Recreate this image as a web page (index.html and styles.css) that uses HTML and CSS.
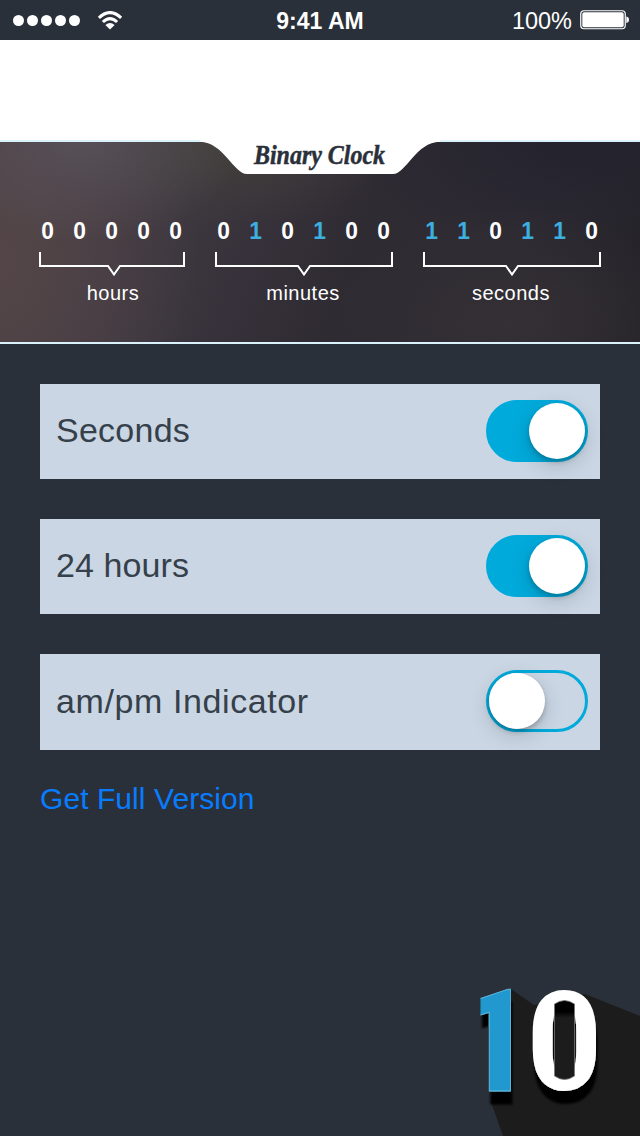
FILE: index.html
```html
<!DOCTYPE html>
<html lang="en">
<head>
<meta charset="utf-8">
<title>Binary Clock</title>
<link rel="stylesheet" href="styles.css">
</head>
<body>
<main class="screen">
  <header class="status">
    <div class="signal">
      <div class="dots"><i></i><i></i><i></i><i></i><i></i></div>
      <svg class="wifi" width="26" height="19" viewBox="0 0 26 19">
        <path d="M1.9 6.8Q13-3.6 24.1 6.8M5.9 11Q13 4.2 20.1 11" fill="none" stroke="#fff" stroke-width="3.1"/>
        <path d="M8.4 14Q13 9.8 17.6 14L13 18.4Z" fill="#fff"/>
      </svg>
    </div>
    <div class="time">9:41 AM</div>
    <div class="power">
      <span class="percent">100%</span>
      <svg width="50" height="20" viewBox="0 0 50 20">
        <rect x=".75" y=".75" width="44.5" height="18" rx="3.2" fill="none" stroke="#fff" stroke-width="1.2"/>
        <rect x="2.3" y="2.3" width="41.4" height="15" rx="1.8" fill="#fff"/>
        <path d="M46.3 6.500Q49 7 49 9.800Q49 12.500 46.300 13Z" fill="#fff"/>
      </svg>
    </div>
  </header>
  <div class="banner"></div>
  <section class="clock">
    <svg class="tab" width="240" height="34" viewBox="0 0 240 34">
      <path d="M0 0V1.700C23 2 34 34 47 34H193C206 34 216 2 240 1.700V0Z" fill="#fff"/>
      <text class="title" x="54" y="24" textLength="131" lengthAdjust="spacingAndGlyphs">Binary Clock</text>
    </svg>
    <div class="group hours">
      <div class="bits"><b>0</b><b>0</b><b>0</b><b>0</b><b>0</b></div>
      <svg class="bracket" width="146" height="26" viewBox="0 0 146 26"><path d="M1 0V14H69L75 22.500L81 14H145V0"/></svg>
      <div class="unit">hours</div>
    </div>
    <div class="group">
      <div class="bits"><b>0</b><b class="on">1</b><b>0</b><b class="on">1</b><b>0</b><b>0</b></div>
      <svg class="bracket" width="178" height="26" viewBox="0 0 178 26"><path d="M1 0V14H83L89 22.500L95 14H177V0"/></svg>
      <div class="unit">minutes</div>
    </div>
    <div class="group">
      <div class="bits"><b class="on">1</b><b class="on">1</b><b>0</b><b class="on">1</b><b class="on">1</b><b>0</b></div>
      <svg class="bracket" width="178" height="26" viewBox="0 0 178 26"><path d="M1 0V14H83L89 22.500L95 14H177V0"/></svg>
      <div class="unit">seconds</div>
    </div>
  </section>
  <section class="settings">
    <div class="row"><span class="label wide">Seconds</span><span class="switch checked"><i></i></span></div>
    <div class="row"><span class="label">24 hours</span><span class="switch checked"><i></i></span></div>
    <div class="row tall"><span class="label wider">am/pm Indicator</span><span class="switch"><i></i></span></div>
  </section>
  <a class="upgrade">Get Full Version</a>
  <svg class="logo" width="180" height="166" viewBox="0 0 180 166">
    <defs>
      <filter id="shadow" x="-20%" y="-20%" width="150%" height="150%"><feDropShadow dx="1.500" dy="13" stdDeviation="1.200" flood-color="#000" flood-opacity="1"/></filter>
      <clipPath id="flag"><rect x="20.500" y="0" width="50" height="130"/></clipPath>
      <linearGradient id="well" x1="0" y1="0" x2="0" y2="1"><stop offset=".14" stop-color="#000"/><stop offset=".22" stop-color="#1c1c1c"/></linearGradient>
    </defs>
    <path d="M51 19L74 35L125 24L180 46V166H43L31 132Z" fill="#1c1c1c"/>
    <g filter="url(#shadow)">
      <g clip-path="url(#flag)"><text class="numeral blue" transform="translate(-8.500 121) scale(1.060 1)">1</text></g>
    </g>
    <g filter="url(#shadow)">
      <text class="numeral white" transform="translate(67.800 119) scale(.9 .96)">0</text>
    </g>
    <path d="M94.500 34Q104.500 27 114.500 34V106Q104.500 113 94.500 106Z" fill="url(#well)" stroke="#777" stroke-width=".8"/>
  </svg>
</main>
</body>
</html>
```
FILE: styles.css
```css
* { box-sizing: border-box; }
body { margin: 0; }
.screen {
  position: relative;
  display: flex;
  flex-direction: column;
  width: 640px;
  height: 1136px;
  overflow: hidden;
  background: #2a303a;
  color: #fff;
  font-family: "Liberation Sans", Arial, sans-serif;
}
.status {
  display: grid;
  grid-template-columns: 1fr auto 1fr;
  align-items: center;
  height: 40px;
  padding: 0 10px 0 10px;
}
.signal { display: flex; align-items: center; gap: 17px; padding-left: 3px; }
.dots { display: flex; gap: 3px; }
.dots i { width: 11px; height: 11px; border-radius: 50%; background: #fff; }
.time { font-size: 23px; font-weight: bold; padding-top: 2px; }
.power { display: flex; align-items: center; justify-content: flex-end; gap: 8px; }
.percent { font-size: 23.5px; padding-top: 2px; }
.banner { height: 100px; background: #fff; }
.clock {
  position: relative;
  display: flex;
  gap: 16px;
  height: 204px;
  padding: 73px 0 0 31px;
  border-top: 2px solid #d9f2fb;
  border-bottom: 2px solid #d9f2fb;
  background:
    radial-gradient(ellipse 160px 100px at 85px 0, #5a545ccc, #5a545c00),
    radial-gradient(ellipse 170px 90px at 225px 0, #43403add, #43403a00),
    radial-gradient(ellipse 200px 260px at 0 120px, #544648, #54464800),
    radial-gradient(ellipse 180px 120px at 510px 180px, #343035, #34303500),
    radial-gradient(ellipse 240px 100px at 580px 0, #24232d, #24232d00),
    linear-gradient(110deg, #483f45 0%, #3d3740 28%, #2f2b33 55%, #2c2932 78%, #242228 100%);
}
.tab { position: absolute; left: 200px; top: -2px; }
.title {
  font: italic bold 27px "Liberation Serif", serif;
  fill: #2a303a;
  stroke: #2a303a;
  stroke-width: .5px;
}
.bits { display: flex; height: 33px; font-size: 24px; line-height: 32px; }
.bits b { width: 32px; text-align: center; transform: translateX(.5px) scaleX(.95); }
.bits .on { color: #3caedf; }
.bracket { display: block; margin: 4px 6px 0 8px; fill: none; stroke: #fff; stroke-width: 2; }
.unit { margin: 3px 0 0; text-align: center; font-size: 20px; line-height: 25px; letter-spacing: .5px; }
.hours .unit { margin-left: 4px; }
.settings { display: flex; flex-direction: column; gap: 40px; padding: 40px 40px 0; }
.row {
  display: flex;
  align-items: flex-start;
  justify-content: space-between;
  height: 95px;
  padding: 16px 12px 0 16px;
  background: #cad6e4;
}
.tall { height: 96px; }
.label { color: #36404a; font-size: 34px; line-height: 61px; letter-spacing: .1px; }
.wide { letter-spacing: .25px; }
.wider { letter-spacing: .6px; line-height: 63px; }
.switch {
  display: flex;
  width: 102px;
  height: 62px;
  border: 3px solid #00aadb;
  border-radius: 31px;
}
.switch i { width: 56px; height: 56px; border-radius: 50%; background: #fff; box-shadow: 0 3px 5px #0003, 0 6px 20px #0000002b; }
.checked { justify-content: flex-end; background: #00aadb; }
.upgrade { align-self: flex-start; margin: 31px 0 0 40px; color: #087cff; font-size: 30px; line-height: 36px; letter-spacing: .07px; }
.logo { position: absolute; right: 0; bottom: 0; }
.numeral { font: bold 142px Roboto, sans-serif; }
.blue { fill: #2099ce; stroke: #65bce0; stroke-width: .8px; }
.white { fill: #fff; stroke: #fff; stroke-width: 2px; }
```
